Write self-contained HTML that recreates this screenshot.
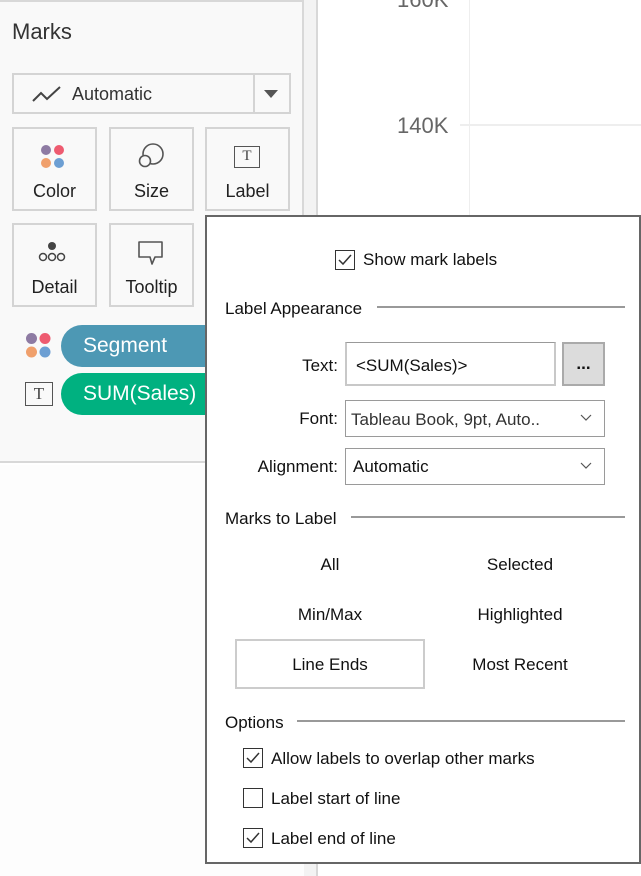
<!DOCTYPE html>
<html><head><style>
*{margin:0;padding:0;box-sizing:border-box}
body{width:641px;height:876px;position:relative;overflow:hidden;background:#fff;font-family:"Liberation Sans",sans-serif;color:#111}
.a{position:absolute}
.t{position:absolute;line-height:20px;font-size:17px;white-space:nowrap}
.btn{position:absolute;border:2px solid #d4d4d4;background:#f9f9f9;width:85px;height:84px}
.btn span{position:absolute;left:0;right:0;top:52px;text-align:center;font-size:18px;color:#222}
.cb{position:absolute;width:20px;height:20px;border:1.5px solid #333;background:#fff}
.hl{position:absolute;height:2px;background:#999}
.sel{position:absolute;border:1px solid #9a9a9a;background:#fff}
</style></head><body>
<div class="a" style="left:0;top:0;width:304px;height:463px;background:#f9f9f9;border-right:2px solid #d8d8d8;border-bottom:2px solid #d8d8d8"></div>
<div class="a" style="left:0;top:0;width:304px;height:2px;background:#d8d8d8"></div>
<div class="a" style="left:304px;top:0;width:13px;height:876px;background:#f3f3f3"></div>
<div class="a" style="left:316px;top:0;width:2px;height:876px;background:#d8d8d8"></div>
<div class="a" style="left:0;top:465px;width:304px;height:411px;background:#fdfdfd"></div>
<div class="a" style="left:469px;top:0;width:1px;height:215px;background:#eee"></div>
<div class="a" style="left:460px;top:124px;width:181px;height:2px;background:#eee"></div>
<div class="t" style="left:397px;top:-12px;font-size:22px;color:#666;line-height:24px">160K</div>
<div class="t" style="left:397px;top:114px;font-size:22px;color:#666;line-height:24px">140K</div>

<div class="t" style="left:12px;top:19px;font-size:22px;line-height:26px;color:#333">Marks</div>
<div class="a" style="left:12px;top:73px;width:279px;height:41px;border:2px solid #d4d4d4;background:#f9f9f9"></div>
<div class="a" style="left:253px;top:75px;width:2px;height:37px;background:#d4d4d4"></div>
<svg class="a" style="left:32px;top:85px" width="30" height="18"><polyline points="1,16 9,8 15,14 28,2" fill="none" stroke="#444" stroke-width="2"/></svg>
<div class="t" style="left:72px;top:84px;font-size:18px;color:#333">Automatic</div>
<svg class="a" style="left:264px;top:90px" width="14" height="8"><polygon points="0,0 14,0 7,8" fill="#555"/></svg>

<div class="btn" style="left:12px;top:127px"><span>Color</span></div>
<svg class="a" style="left:40px;top:145px" width="26" height="24"><circle cx="6" cy="5" r="5" fill="#8e7ba3"/><circle cx="19" cy="5" r="5" fill="#ee5b70"/><circle cx="6" cy="18" r="5" fill="#f0a06c"/><circle cx="19" cy="18" r="5" fill="#6d9fd3"/></svg>
<div class="btn" style="left:109px;top:127px"><span>Size</span></div>
<svg class="a" style="left:137px;top:143px" width="28" height="26"><circle cx="16" cy="11" r="10" fill="none" stroke="#555" stroke-width="1.6"/><circle cx="8" cy="18" r="5.5" fill="#f9f9f9" stroke="#555" stroke-width="1.6"/></svg>
<div class="btn" style="left:205px;top:127px"><span>Label</span></div>
<div class="a" style="left:234px;top:146px;width:26px;height:22px;border:1.5px solid #555;font-family:'Liberation Serif',serif;font-size:15px;text-align:center;line-height:19px;color:#444">T</div>
<div class="btn" style="left:12px;top:223px"><span>Detail</span></div>
<svg class="a" style="left:37px;top:241px" width="30" height="22"><circle cx="15" cy="5" r="4" fill="#444"/><circle cx="6" cy="16" r="3.5" fill="none" stroke="#444" stroke-width="1.5"/><circle cx="15" cy="16" r="3.5" fill="none" stroke="#444" stroke-width="1.5"/><circle cx="24" cy="16" r="3.5" fill="none" stroke="#444" stroke-width="1.5"/></svg>
<div class="btn" style="left:109px;top:223px"><span>Tooltip</span></div>
<svg class="a" style="left:137px;top:240px" width="28" height="26"><path d="M2,2 H25 V17 H18 L15,24 L13,17 H2 Z" fill="none" stroke="#555" stroke-width="1.6" stroke-linejoin="round"/></svg>

<svg class="a" style="left:25px;top:332px" width="28" height="28"><circle cx="6.5" cy="6.5" r="5.5" fill="#8e7ba3"/><circle cx="20" cy="6.5" r="5.5" fill="#ee5b70"/><circle cx="6.5" cy="20" r="5.5" fill="#f0a06c"/><circle cx="20" cy="20" r="5.5" fill="#6d9fd3"/></svg>
<div class="a" style="left:61px;top:325px;width:200px;height:42px;border-radius:21px;background:#4d98b4"></div>
<div class="t" style="left:83px;top:334px;font-size:21px;line-height:24px;color:#fff">Segment</div>
<div class="a" style="left:25px;top:382px;width:28px;height:24px;border:1.5px solid #555;font-family:'Liberation Serif',serif;font-size:17px;text-align:center;line-height:21px;color:#444">T</div>
<div class="a" style="left:61px;top:373px;width:200px;height:42px;border-radius:21px;background:#00b180"></div>
<div class="t" style="left:83px;top:382px;font-size:21px;line-height:24px;color:#fff">SUM(Sales)</div>

<div class="a" style="left:205px;top:215px;width:436px;height:649px;background:#fff;border:2px solid #666"></div>
<div class="cb" style="left:335px;top:250px"></div>
<svg class="a" style="left:338px;top:253px" width="14" height="14"><polyline points="1,7 5,11 13,2" fill="none" stroke="#333" stroke-width="1.5"/></svg>
<div class="t" style="left:363px;top:250px">Show mark labels</div>

<div class="t" style="left:225px;top:299px">Label Appearance</div>
<div class="hl" style="left:377px;top:306px;width:248px"></div>
<div class="t" style="left:258px;top:356px;width:80px;text-align:right">Text:</div>
<div class="a" style="left:345px;top:342px;width:211px;height:44px;border:1px solid #999;border-right:2px solid #c8c8c8;border-bottom:2px solid #c8c8c8;border-left:2px solid #c8c8c8"></div>
<div class="t" style="left:356px;top:356px">&lt;SUM(Sales)&gt;</div>
<div class="a" style="left:562px;top:342px;width:43px;height:44px;background:#dcdcdc;border:2px solid #aaa;text-align:center;line-height:40px;font-size:17px;font-weight:bold">...</div>
<div class="t" style="left:258px;top:409px;width:80px;text-align:right">Font:</div>
<div class="sel" style="left:345px;top:400px;width:260px;height:37px"></div>
<div class="t" style="left:351px;top:410px;color:#333">Tableau Book, 9pt, Auto..</div>
<svg class="a" style="left:580px;top:414px" width="12" height="8"><polyline points="1,1 6,6 11,1" fill="none" stroke="#555" stroke-width="1.2"/></svg>
<div class="t" style="left:238px;top:457px;width:100px;text-align:right">Alignment:</div>
<div class="sel" style="left:345px;top:448px;width:260px;height:37px"></div>
<div class="t" style="left:353px;top:457px">Automatic</div>
<svg class="a" style="left:580px;top:462px" width="12" height="8"><polyline points="1,1 6,6 11,1" fill="none" stroke="#555" stroke-width="1.2"/></svg>

<div class="t" style="left:225px;top:509px">Marks to Label</div>
<div class="hl" style="left:351px;top:516px;width:274px"></div>
<div class="t" style="left:236px;top:555px;width:188px;text-align:center">All</div>
<div class="t" style="left:425px;top:555px;width:190px;text-align:center">Selected</div>
<div class="t" style="left:236px;top:605px;width:188px;text-align:center">Min/Max</div>
<div class="t" style="left:425px;top:605px;width:190px;text-align:center">Highlighted</div>
<div class="a" style="left:235px;top:639px;width:190px;height:50px;border:2px solid #ccc"></div>
<div class="t" style="left:236px;top:655px;width:188px;text-align:center">Line Ends</div>
<div class="t" style="left:425px;top:655px;width:190px;text-align:center">Most Recent</div>

<div class="t" style="left:225px;top:713px">Options</div>
<div class="hl" style="left:297px;top:720px;width:328px"></div>
<div class="cb" style="left:243px;top:748px"></div>
<svg class="a" style="left:246px;top:751px" width="14" height="14"><polyline points="1,7 5,11 13,2" fill="none" stroke="#333" stroke-width="1.5"/></svg>
<div class="t" style="left:271px;top:749px">Allow labels to overlap other marks</div>
<div class="cb" style="left:243px;top:788px"></div>
<div class="t" style="left:271px;top:789px">Label start of line</div>
<div class="cb" style="left:243px;top:828px"></div>
<svg class="a" style="left:246px;top:831px" width="14" height="14"><polyline points="1,7 5,11 13,2" fill="none" stroke="#333" stroke-width="1.5"/></svg>
<div class="t" style="left:271px;top:829px">Label end of line</div>
</body></html>
